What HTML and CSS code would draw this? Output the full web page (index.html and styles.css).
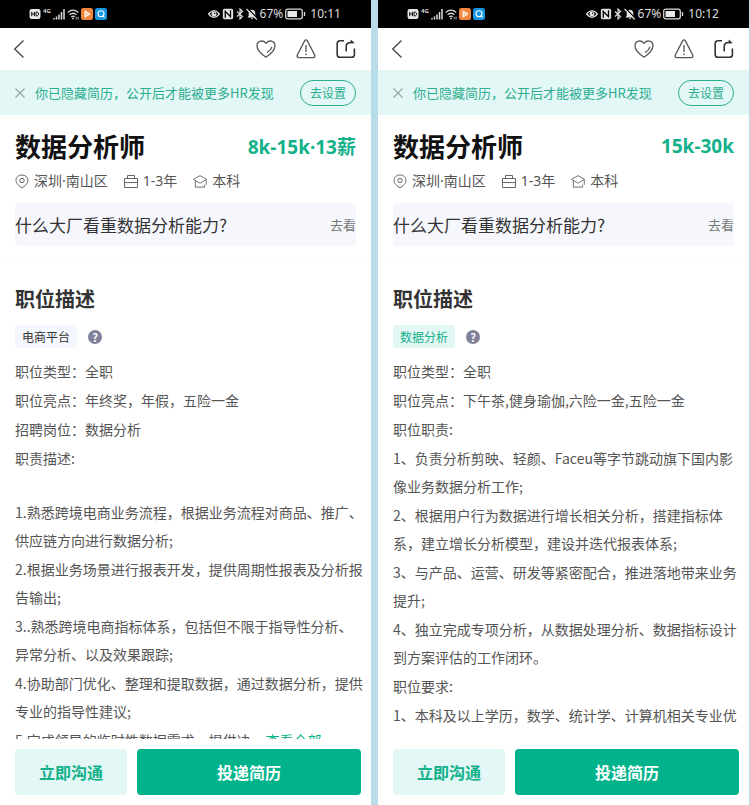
FILE: index.html
```
<!DOCTYPE html>
<html lang="zh-CN">
<head>
    <meta charset="UTF-8">
    <meta name="viewport" content="width=device-width, initial-scale=1.0">
    <title>数据分析师</title>
    <link rel="stylesheet" href="styles.css">
</head>
<body>

<!-- icons shared by both screens -->
<svg class="sprite" aria-hidden="true">
    <symbol id="i-hd" viewBox="0 0 11 11"><rect x="0.5" y="1" width="10" height="9" rx="2" fill="#e8e8e8"/><path d="M2.5 3.5v4M5 3.5v4M2.5 5.5H5M6.5 3.7v3.6h1l1.2-1V4.7l-1.2-1z" stroke="#111" stroke-width="0.9" fill="none"/></symbol>
    <symbol id="i-signal" viewBox="0 0 12 12"><path d="M1 10v1.5M3.5 8.5v3M6 6.5v5M8.5 4v7.5M11 1v10.5" stroke="#ddd" stroke-width="1.5"/></symbol>
    <symbol id="i-wifi" viewBox="0 0 13 12"><path d="M0.8 4.3Q6.5-0.6 12.2 4.3M2.8 6.8Q6.5 3.6 10.2 6.8M4.6 9Q6.5 7.6 8.4 9" stroke="#ddd" stroke-width="1.4" fill="none"/><circle cx="6.5" cy="10.8" r="1" fill="#ddd"/><path d="M10 9v3M12 9v3" stroke="#ddd" stroke-width="0.8"/></symbol>
    <symbol id="i-play" viewBox="0 0 12 12"><rect width="12" height="12" rx="2.5" fill="#f08740"/><path d="M4 3l5 3-5 3z" fill="#f7c9a0" stroke="#fff" stroke-linejoin="round"/></symbol>
    <symbol id="i-find" viewBox="0 0 12 12"><rect width="12" height="12" rx="2.5" fill="#1596e0"/><circle cx="6" cy="5.8" r="3" fill="none" stroke="#fff" stroke-width="1.1"/><path d="M7.5 7.5l2 2" stroke="#fff" stroke-width="1.1"/></symbol>
    <symbol id="i-eye" viewBox="0 0 13 10"><path d="M0.7 5Q6.5-2.2 12.3 5Q6.5 12.2 0.7 5z" fill="none" stroke="#e4e4e4" stroke-width="1.3"/><circle cx="6.5" cy="5" r="2.7" fill="#e4e4e4"/><circle cx="7.2" cy="4.2" r="0.8" fill="#000"/></symbol>
    <symbol id="i-nfc" viewBox="0 0 10 11"><rect x="0.3" y="0.7" width="9.4" height="9.6" rx="1.5" fill="#e4e4e4"/><path d="M2.5 9V3l4.8 5V2" stroke="#000" stroke-width="1.2" fill="none"/></symbol>
    <symbol id="i-bt" viewBox="0 0 8 12"><path d="M1 3.5l5.5 5L4 11V1l2.5 2.5-5.5 5" stroke="#e4e4e4" stroke-width="1.1" fill="none"/></symbol>
    <symbol id="i-mute" viewBox="0 0 12 12"><path d="M1.5 9.5h9L9.3 7.8V5Q9 2 6 1.8Q3 2 2.7 5v2.8zM4.8 10h2.4L6 11.3z" fill="#e4e4e4"/><path d="M1.8 0.5L12 11" stroke="#000" stroke-width="1.2"/><path d="M0.5 1l10.3 10.5" stroke="#e4e4e4" stroke-width="1.1"/></symbol>
    <symbol id="i-battery" viewBox="0 0 21 12"><rect x="0.7" y="1.2" width="16.6" height="9.6" rx="2" fill="none" stroke="#ddd" stroke-width="1.2"/><rect x="2.5" y="3" width="9.5" height="6" fill="#e8e8e8"/><path d="M19.5 4v4" stroke="#ddd" stroke-width="1.3"/></symbol>
    <symbol id="i-back" viewBox="0 0 12 20"><path d="M10.500 1.500L1.700 10l8.800 8.500" fill="none" stroke="#444" stroke-width="1.3"/></symbol>
    <symbol id="i-heart" viewBox="0 0 20 20"><path d="M10 18.2C7 16.2 1 11.5 1 6.8C1 2 7.2 0.2 10 4.3C12.8 0.2 19 2 19 6.8C19 11.5 13 16.2 10 18.2z" fill="none" stroke="#555" stroke-width="1.3" stroke-linejoin="round"/><path d="M15.8 8.2Q14.8 11 11.5 13.3" fill="none" stroke="#555" stroke-width="1.2" stroke-linecap="round"/></symbol>
    <symbol id="i-warn" viewBox="0 0 20 20"><path d="M8.6 1.9Q10 0 11.4 1.9L18.7 16Q19.5 18.4 17.2 18.6H2.8Q0.5 18.4 1.3 16z" fill="none" stroke="#555" stroke-width="1.3"/><path d="M10 6v7" stroke="#555" stroke-width="1.3"/><circle cx="10" cy="15.3" r="0.9" fill="#555"/></symbol>
    <symbol id="i-share" viewBox="0 0 20 20"><path d="M8 1.8H4Q1.2 1.8 1.2 4.6v10.8q0 2.8 2.8 2.8h11.6q2.800 0 2.800-2.800V9.500" fill="none" stroke="#333" stroke-width="1.6"/><path d="M10.2 12.5V7.8q0-4.300 4.300-4.300H17" fill="none" stroke="#333" stroke-width="1.6"/><path d="M14.6 0.500l4.400 3.800h-4.400z" fill="#333"/></symbol>
    <symbol id="i-close" viewBox="0 0 10 10"><path d="M0.5 0.5l9 9M9.5 0.5l-9 9" stroke="#8fa5a5" stroke-width="1.1"/></symbol>
    <symbol id="i-pin" viewBox="0 0 14 15"><path d="M7 14C4.5 12.3 1 9.5 1 6.5C1 3 3.700 1 7 1S13 3 13 6.5C13 9.5 9.5 12.3 7 14z" fill="none" stroke="#666"/><circle cx="7" cy="6.5" r="2.2" fill="none" stroke="#666"/></symbol>
    <symbol id="i-bag" viewBox="0 0 14 15"><path d="M0.5 4.5h13v9H0.5zM3.5 4.5V1.5h7v3M0.5 8.5h13" fill="none" stroke="#666" stroke-linejoin="round"/></symbol>
    <symbol id="i-cap" viewBox="0 0 15 15"><path d="M7.5 1.2L14.5 5.2 7.5 9.3 0.5 5.2zM2.5 6.8V13.5h10V11M14.2 5.5V11" fill="none" stroke="#666" stroke-linejoin="round"/></symbol>
</svg>

<main class="screens">

    <!-- left screen -->
    <section class="phone">
        <div class="status">
            <div class="status-left">
                <svg class="s-icon"><use href="#i-hd"/></svg>
                <span class="net">4G</span>
                <svg class="s-icon"><use href="#i-signal"/></svg>
                <svg class="s-icon"><use href="#i-wifi"/></svg>
                <svg class="s-icon"><use href="#i-play"/></svg>
                <svg class="s-icon"><use href="#i-find"/></svg>
            </div>
            <div class="status-right">
                <svg class="s-icon"><use href="#i-eye"/></svg>
                <svg class="s-icon"><use href="#i-nfc"/></svg>
                <svg class="s-icon s-narrow"><use href="#i-bt"/></svg>
                <svg class="s-icon"><use href="#i-mute"/></svg>
                <span>67%</span>
                <svg class="s-battery"><use href="#i-battery"/></svg>
                <span class="clock">10:11</span>
            </div>
        </div>

        <header class="toolbar">
            <button class="icon-btn back" aria-label="返回"><svg><use href="#i-back"/></svg></button>
            <button class="icon-btn" aria-label="收藏"><svg><use href="#i-heart"/></svg></button>
            <button class="icon-btn" aria-label="举报"><svg><use href="#i-warn"/></svg></button>
            <button class="icon-btn" aria-label="分享"><svg><use href="#i-share"/></svg></button>
        </header>

        <div class="notice">
            <button class="close" aria-label="关闭"><svg><use href="#i-close"/></svg></button>
            <p>你已隐藏简历，公开后才能被更多HR发现</p>
            <button class="set-btn">去设置</button>
        </div>

        <div class="job">
            <div class="job-head">
                <h1>数据分析师</h1>
                <span class="salary">8k-15k·13薪</span>
            </div>
            <ul class="meta">
                <li><svg><use href="#i-pin"/></svg>深圳·南山区</li>
                <li><svg><use href="#i-bag"/></svg>1-3年</li>
                <li><svg><use href="#i-cap"/></svg>本科</li>
            </ul>
            <div class="topic">
                <span>什么大厂看重数据分析能力?</span>
                <a href="#">去看</a>
            </div>
        </div>

        <div class="desc">
            <h2>职位描述</h2>
            <div class="tags">
                <span class="tag">电商平台</span>
                <button class="help" aria-label="帮助">?</button>
            </div>
            <div class="text">
                <p>职位类型：全职</p>
                <p>职位亮点：年终奖，年假，五险一金</p>
                <p>招聘岗位：数据分析</p>
                <p class="space">职责描述:</p>
                <p>1.熟悉跨境电商业务流程，根据业务流程对商品、推广、<br>供应链方向进行数据分析;</p>
                <p>2.根据业务场景进行报表开发，提供周期性报表及分析报<br>告输出;</p>
                <p>3..熟悉跨境电商指标体系，包括但不限于指导性分析、<br>异常分析、以及效果跟踪;</p>
                <p>4.协助部门优化、整理和提取数据，通过数据分析，提供<br>专业的指导性建议;</p>
                <p>5.完成领导的临时性数据需求，提供决... <a href="#">查看全部</a></p>
            </div>
        </div>

        <footer class="actions">
            <button class="chat">立即沟通</button>
            <button class="apply">投递简历</button>
        </footer>
    </section>

    <!-- right screen -->
    <section class="phone">
        <div class="status">
            <div class="status-left">
                <svg class="s-icon"><use href="#i-hd"/></svg>
                <span class="net">4G</span>
                <svg class="s-icon"><use href="#i-signal"/></svg>
                <svg class="s-icon"><use href="#i-wifi"/></svg>
                <svg class="s-icon"><use href="#i-play"/></svg>
                <svg class="s-icon"><use href="#i-find"/></svg>
            </div>
            <div class="status-right">
                <svg class="s-icon"><use href="#i-eye"/></svg>
                <svg class="s-icon"><use href="#i-nfc"/></svg>
                <svg class="s-icon s-narrow"><use href="#i-bt"/></svg>
                <svg class="s-icon"><use href="#i-mute"/></svg>
                <span>67%</span>
                <svg class="s-battery"><use href="#i-battery"/></svg>
                <span class="clock">10:12</span>
            </div>
        </div>

        <header class="toolbar">
            <button class="icon-btn back" aria-label="返回"><svg><use href="#i-back"/></svg></button>
            <button class="icon-btn" aria-label="收藏"><svg><use href="#i-heart"/></svg></button>
            <button class="icon-btn" aria-label="举报"><svg><use href="#i-warn"/></svg></button>
            <button class="icon-btn" aria-label="分享"><svg><use href="#i-share"/></svg></button>
        </header>

        <div class="notice">
            <button class="close" aria-label="关闭"><svg><use href="#i-close"/></svg></button>
            <p>你已隐藏简历，公开后才能被更多HR发现</p>
            <button class="set-btn">去设置</button>
        </div>

        <div class="job">
            <div class="job-head">
                <h1>数据分析师</h1>
                <span class="salary">15k-30k</span>
            </div>
            <ul class="meta">
                <li><svg><use href="#i-pin"/></svg>深圳·南山区</li>
                <li><svg><use href="#i-bag"/></svg>1-3年</li>
                <li><svg><use href="#i-cap"/></svg>本科</li>
            </ul>
            <div class="topic">
                <span>什么大厂看重数据分析能力?</span>
                <a href="#">去看</a>
            </div>
        </div>

        <div class="desc">
            <h2>职位描述</h2>
            <div class="tags">
                <span class="tag tag-green">数据分析</span>
                <button class="help" aria-label="帮助">?</button>
            </div>
            <div class="text">
                <p>职位类型：全职</p>
                <p>职位亮点：下午茶,健身瑜伽,六险一金,五险一金</p>
                <p>职位职责:</p>
                <p>1、负责分析剪映、轻颜、Faceu等字节跳动旗下国内影<br>像业务数据分析工作;</p>
                <p>2、根据用户行为数据进行增长相关分析，搭建指标体<br>系，建立增长分析模型，建设并迭代报表体系;</p>
                <p>3、与产品、运营、研发等紧密配合，推进落地带来业务<br>提升;</p>
                <p>4、独立完成专项分析，从数据处理分析、数据指标设计<br>到方案评估的工作闭环。</p>
                <p>职位要求:</p>
                <p>1、本科及以上学历，数学、统计学、计算机相关专业优</p>
            </div>
        </div>

        <footer class="actions">
            <button class="chat">立即沟通</button>
            <button class="apply">投递简历</button>
        </footer>
    </section>

</main>

</body>
</html>
```
FILE: styles.css
```
* {
    margin: 0;
    padding: 0;
    box-sizing: border-box;
}

body {
    font-family: 'Noto Sans CJK SC', sans-serif;
    background-color: #b9dde8;
    color: #333;
}

button {
    font-family: inherit;
    border: none;
    background: none;
    cursor: pointer;
}

a {
    color: #00b38a;
    text-decoration: none;
}

svg {
    display: block;
    flex-shrink: 0;
}

.sprite {
    position: absolute;
    width: 0;
    height: 0;
}

.screens {
    display: grid;
    grid-template-columns: 1fr 1fr;
    gap: 7px;
    height: 100vh;
    padding-right: 1px;
}

.phone {
    display: flex;
    flex-direction: column;
    min-width: 0;
    min-height: 0;
    overflow: hidden;
    background-color: #fff;
}

/* status bar */
.status {
    display: flex;
    justify-content: space-between;
    flex-shrink: 0;
    height: 28px;
    padding: 0 30px 0 29px;
    background-color: #000;
    color: #ddd;
    font-family: 'Noto Sans', sans-serif;
    font-size: 12px;
    line-height: 28px;
}

.status-left,
.status-right {
    display: flex;
    align-items: center;
    gap: 2px;
}

.s-icon {
    width: 12px;
    height: 12px;
}

.s-narrow {
    width: 8px;
}

.s-battery {
    width: 21px;
    height: 12px;
}

.net {
    font-size: 6px;
    font-weight: bold;
    line-height: 6px;
    margin-bottom: 6px;
}

.clock {
    margin-left: 2px;
}

/* toolbar */
.toolbar {
    display: flex;
    align-items: center;
    gap: 20px;
    flex-shrink: 0;
    height: 42px;
    padding: 0 15px 0 13px;
}

.icon-btn svg {
    width: 20px;
    height: 20px;
}

.back {
    margin-right: auto;
}

.back svg {
    width: 12px;
}

/* notice */
.notice {
    display: flex;
    align-items: center;
    flex-shrink: 0;
    height: 45px;
    padding: 0 15px;
    background-color: #e3f7f6;
    color: #2cae90;
    font-size: 13px;
    white-space: nowrap;
}

.close {
    margin-right: 10px;
}

.close svg {
    width: 10px;
    height: 10px;
}

.set-btn {
    margin-left: auto;
    width: 56px;
    height: 26px;
    border: 1px solid #2cae90;
    border-radius: 13px;
    color: #2cae90;
    font-size: 12px;
    line-height: 24px;
}

/* job header */
.job {
    flex-shrink: 0;
    padding: 11px 15px 10px;
    border-bottom: 1px solid #fdfbfb;
}

.job-head {
    display: flex;
    align-items: center;
    justify-content: space-between;
    height: 40px;
}

h1 {
    font-size: 26px;
    line-height: 40px;
    color: #111;
}

.salary {
    color: #14b18b;
    font-family: 'Noto Sans', 'Noto Sans CJK SC', sans-serif;
    font-size: 19px;
    font-weight: bold;
}

.meta {
    display: flex;
    gap: 16px;
    margin-top: 5px;
    list-style: none;
    color: #555;
    font-family: 'Noto Sans', 'Noto Sans CJK SC', sans-serif;
    font-size: 14px;
    line-height: 20px;
}

.meta li {
    display: flex;
    align-items: center;
    gap: 5px;
}

.meta svg {
    width: 14px;
    height: 15px;
}

.topic {
    display: flex;
    align-items: center;
    justify-content: space-between;
    height: 43px;
    margin-top: 12px;
    border-radius: 4px;
    background-color: #f5f7fd;
    font-size: 17px;
    white-space: nowrap;
}

.topic a {
    color: #777;
    font-size: 13px;
}

/* description */
.desc {
    flex: 1;
    min-height: 0;
    overflow: hidden;
    padding: 27px 15px 0;
}

h2 {
    font-size: 20px;
    line-height: 30px;
}

.tags {
    display: flex;
    align-items: center;
    gap: 11px;
    margin-top: 11px;
}

.tag {
    padding: 0 7px;
    border-radius: 2px;
    background-color: #f4f7fd;
    font-size: 12px;
    line-height: 23px;
}

.tag-green {
    background-color: #e3f7f4;
    color: #14b18b;
}

.help {
    width: 14px;
    height: 14px;
    border-radius: 50%;
    background-color: #81819b;
    color: #fff;
    font-size: 11px;
    font-weight: bold;
    line-height: 14px;
}

.text {
    margin-top: 9px;
    color: #555;
    font-size: 14px;
    line-height: 28px;
    white-space: nowrap;
}

.text p {
    margin-bottom: 1px;
}

.text .space {
    margin-bottom: 26px;
}

/* bottom buttons */
.actions {
    display: flex;
    gap: 10px;
    flex-shrink: 0;
    padding: 10px 10px 10px 15px;
}

.actions button {
    height: 46px;
    border-radius: 4px;
    font-size: 16px;
    font-weight: bold;
}

.chat {
    flex: 1;
    background-color: #e3f7f6;
    color: #14b18b;
}

.apply {
    flex: 2;
    background-color: #00b38a;
    color: #fff;
}
```
